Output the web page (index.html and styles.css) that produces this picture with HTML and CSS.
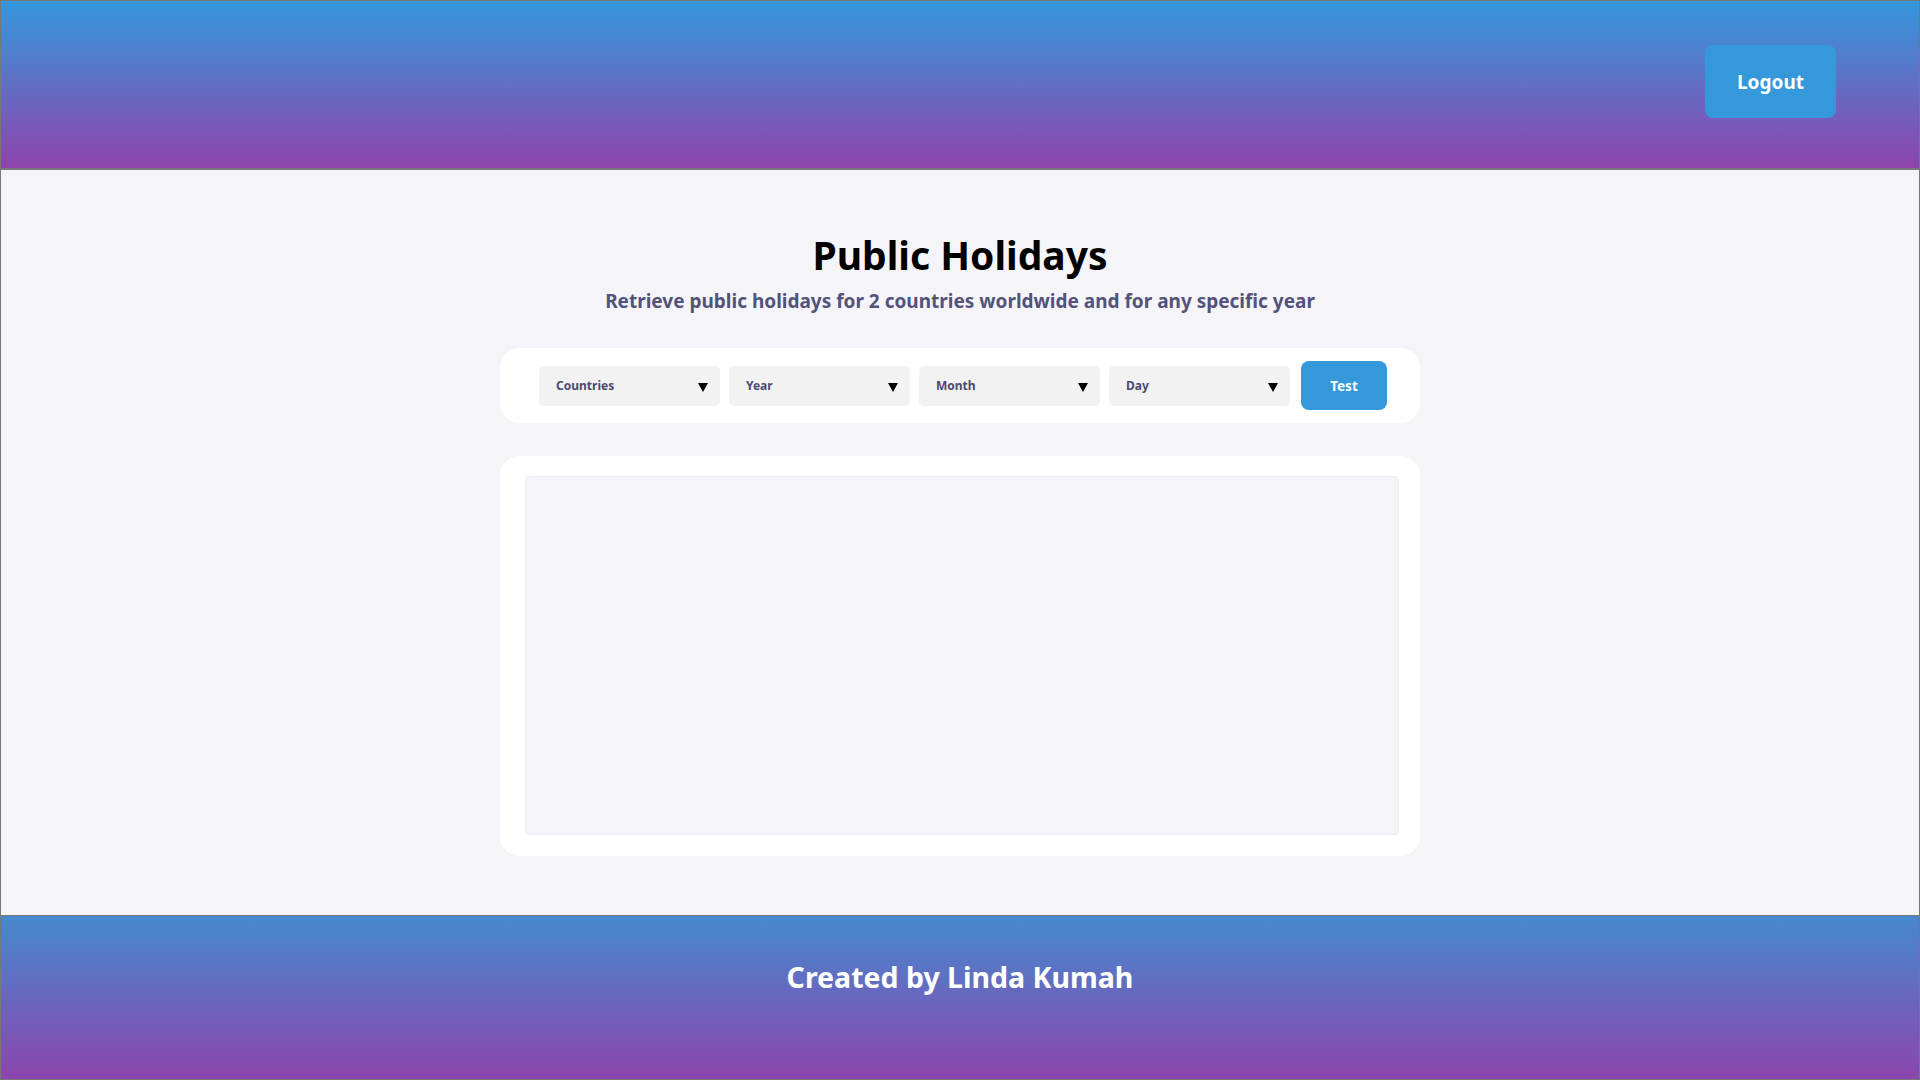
FILE: index.html
```html
<!DOCTYPE html>
<html lang="en">
<head>
<meta charset="utf-8">
<title>Public Holidays</title>
<link rel="stylesheet" href="styles.css">
</head>
<body>
<div class="frame">
  <header class="topbar">
    <button class="btn btn-logout" type="button">Logout</button>
  </header>
  <main class="main">
    <h1 class="title">Public Holidays</h1>
    <p class="subtitle">Retrieve public holidays for 2 countries worldwide and for any specific year</p>
    <div class="filters">
      <div class="select"><span class="select-label">Countries</span><span class="caret"></span></div>
      <div class="select"><span class="select-label">Year</span><span class="caret"></span></div>
      <div class="select"><span class="select-label">Month</span><span class="caret"></span></div>
      <div class="select"><span class="select-label">Day</span><span class="caret"></span></div>
      <button class="btn btn-test" type="button">Test</button>
    </div>
    <section class="results">
      <div class="results-inner"></div>
    </section>
  </main>
  <footer class="footer">
    <p class="footer-text">Created by Linda Kumah</p>
  </footer>
</div>
</body>
</html>
```
FILE: styles.css
```css
* { box-sizing: border-box; }
html, body { margin: 0; padding: 0; }
body {
  font-family: "Noto Sans", "Open Sans", "Liberation Sans", sans-serif;
  background: #f5f4f9;
}
.frame {
  width: 1920px;
  height: 1080px;
  border: 1px solid #787878;
  display: flex;
  flex-direction: column;
}
.topbar {
  flex: 0 0 169px;
  height: 169px;
  background: linear-gradient(#3498db, #8e44ad);
  border-bottom: 2px solid #787878;
  display: flex;
  justify-content: flex-end;
  align-items: flex-start;
  padding: 44px 83px 0 0;
}
.btn {
  border: none;
  cursor: pointer;
  font-family: inherit;
  font-weight: 700;
  color: #fff;
  background: #3498db;
}
.btn-logout {
  width: 131px;
  height: 73px;
  border-radius: 8px;
  font-size: 19px;
}
.main {
  flex: 1 1 auto;
  border-bottom: 1px solid #787878;
  background: #f5f4f9;
  display: flex;
  flex-direction: column;
  align-items: center;
  padding-top: 61px;
}
.title {
  margin: 0;
  font-size: 39px;
  line-height: 48px;
  font-weight: 700;
  color: #000;
}
.subtitle {
  margin: 10px 0 0;
  font-size: 19px;
  line-height: 24px;
  font-weight: 700;
  color: #52527a;
}
.filters {
  margin-top: 35px;
  width: 920px;
  height: 75px;
  background: #fff;
  border-radius: 20px;
  display: flex;
  align-items: center;
  gap: 9px;
  padding-left: 39px;
}
.select {
  width: 181px;
  height: 40px;
  background: #f2f2f2;
  border-radius: 5px;
  display: flex;
  align-items: center;
  justify-content: space-between;
  padding: 0 12px 0 17px;
}
.select-label {
  font-size: 12px;
  font-weight: 700;
  color: #4a4a70;
}
.caret {
  width: 0;
  height: 0;
  border-left: 5px solid transparent;
  border-right: 5px solid transparent;
  border-top: 9px solid #000;
  margin-top: 3px;
}
.btn-test {
  margin-left: 2px;
  width: 86px;
  height: 49px;
  border-radius: 8px;
  font-size: 13.5px;
}
.results {
  margin-top: 33px;
  width: 920px;
  height: 400px;
  background: #fff;
  border-radius: 20px;
  padding: 20px 21px 21px 25px;
  display: flex;
}
.results-inner {
  flex: 1 1 auto;
  background: #f5f4f9;
  border: 1px solid #efeef4;
  border-radius: 4px;
}
.footer {
  flex: 0 0 163px;
  background: linear-gradient(#4589cf, #8c45ad);
  padding-top: 44px;
  text-align: center;
}
.footer-text {
  margin: 0;
  font-size: 28.5px;
  line-height: 34px;
  font-weight: 700;
  color: #fff;
}
```
